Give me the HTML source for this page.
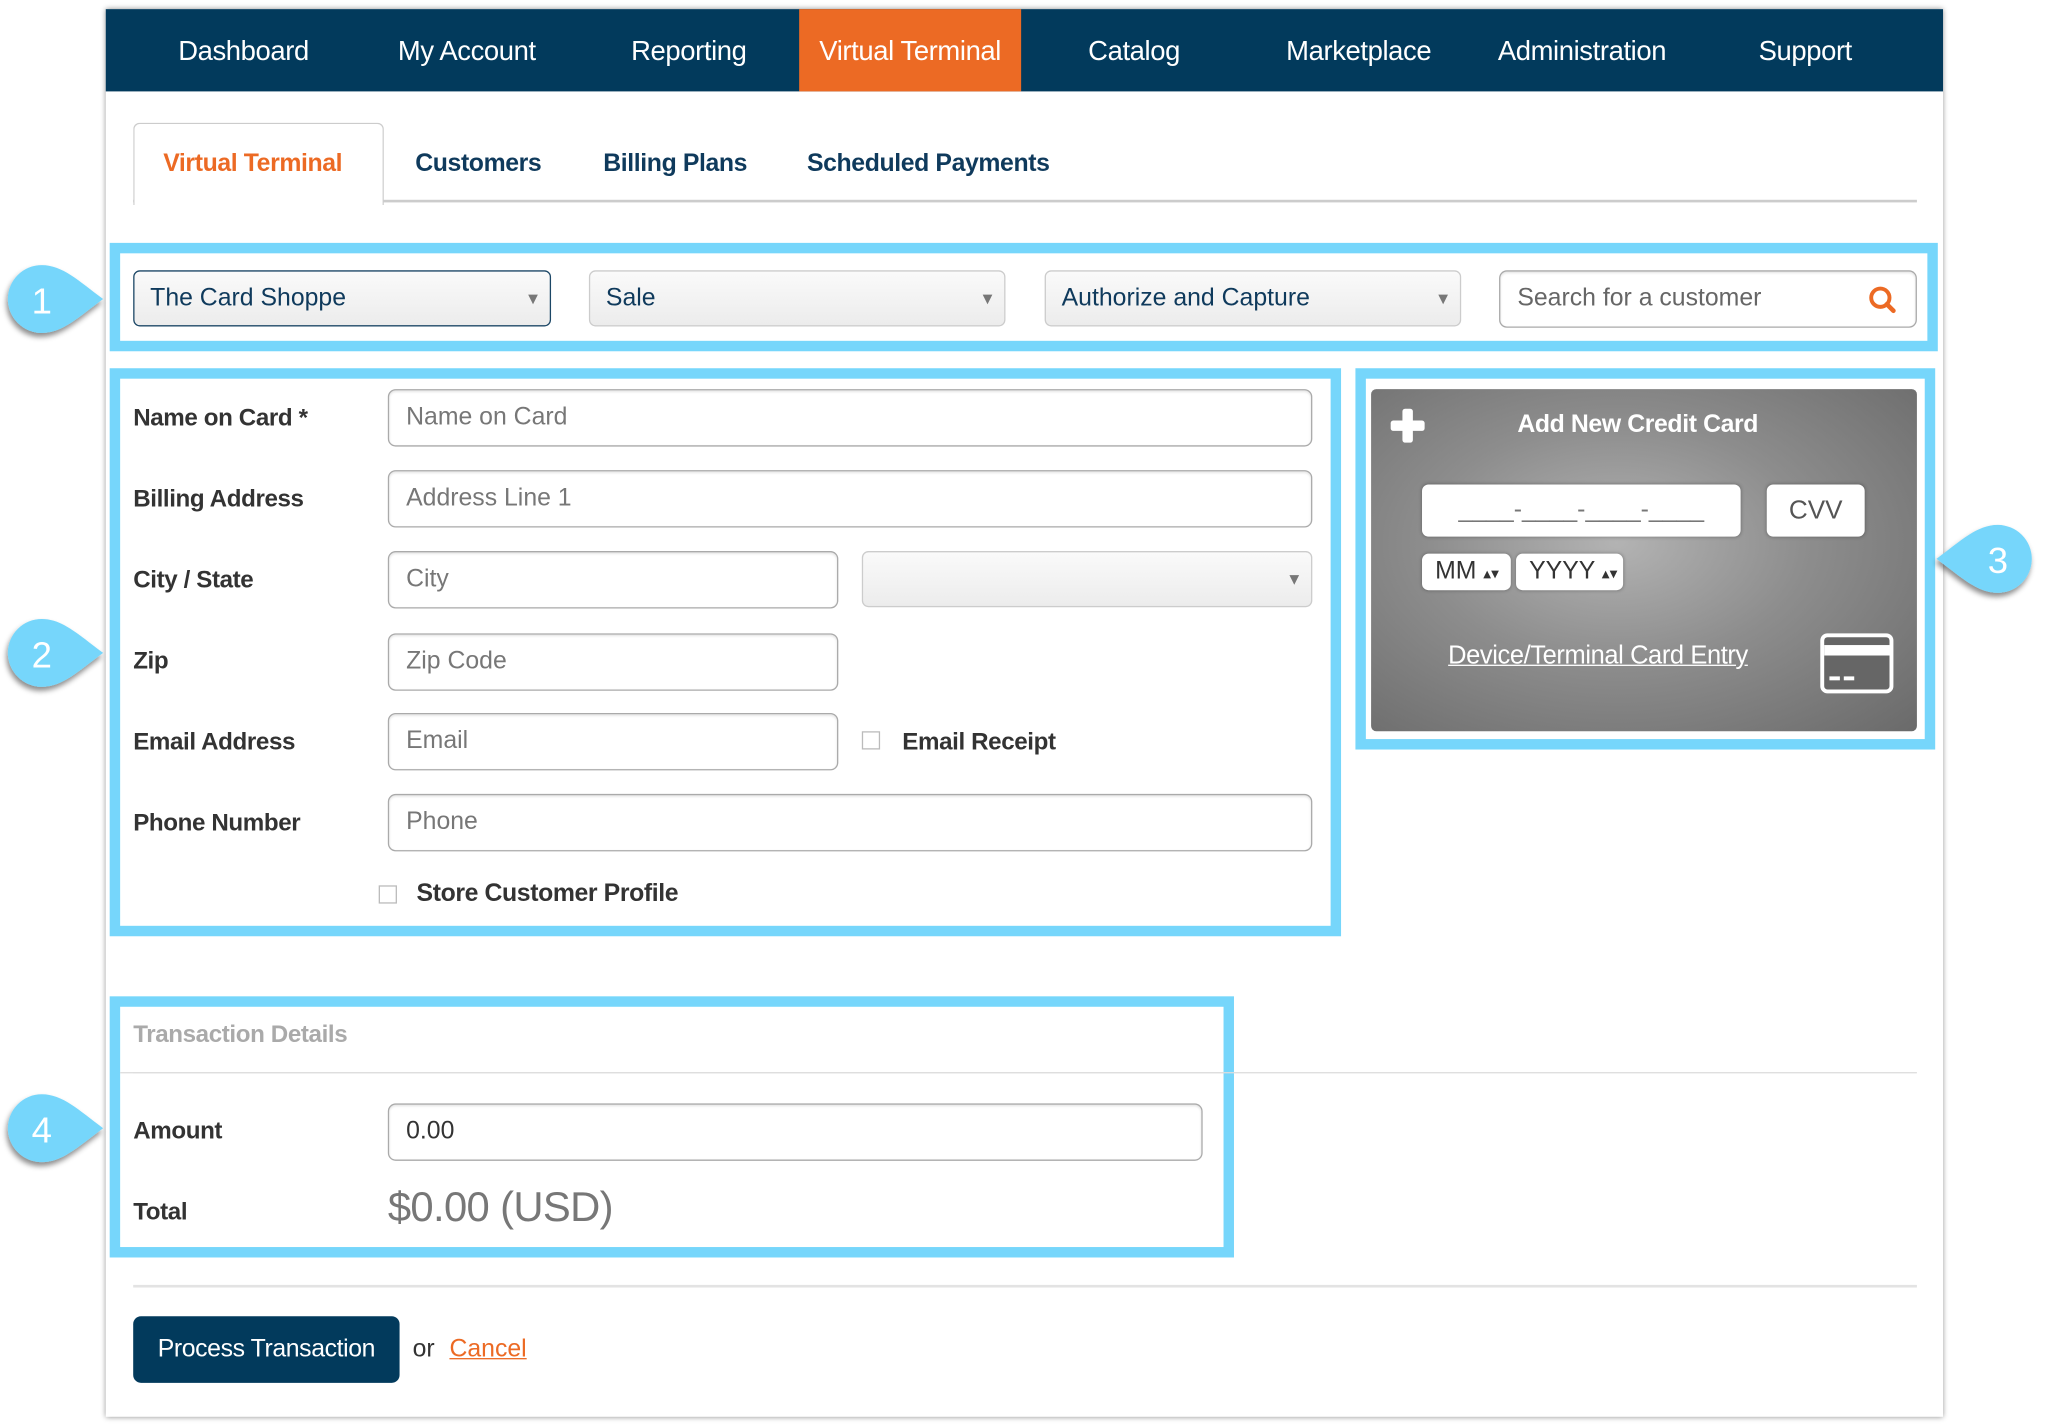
<!DOCTYPE html>
<html><head><meta charset="utf-8"><style>
html,body{margin:0;padding:0;background:#fff;width:2048px;height:1425px;overflow:hidden}
#w{position:absolute;left:0;top:0;width:1562px;height:1087px;transform:scale(1.3058);transform-origin:0 0;font-family:"Liberation Sans",sans-serif}
.a{position:absolute}
.panel{left:81px;top:7px;width:1407px;height:1078px;background:#fff;box-shadow:0 0 4px rgba(0,0,0,.45)}
.nav{left:81px;top:7px;width:1407px;height:63px;background:#023a5c}
.ni{top:9px;height:63px;line-height:62px;color:#fff;font-size:21px;text-align:center;width:171px;letter-spacing:-.3px}
.tab{top:115px;font-size:19px;font-weight:bold;color:#0f3a5c;letter-spacing:-.3px}
.bb{border:8px solid #76d6fb;box-sizing:border-box}
.sel{height:43px;box-sizing:border-box;border:1px solid #ccc;border-radius:5px;background:linear-gradient(#fafafa,#ececec);font-size:19px;color:#0f3a5c;line-height:41px;padding-left:12px}
.sel:after{content:"▾";position:absolute;right:9px;top:0;color:#777;font-size:15px}
.inp{height:44px;box-sizing:border-box;border:1px solid #aaa;border-radius:6px;background:#fff;font-size:19px;color:#777;line-height:42px;padding-left:13px;box-shadow:inset 0 1px 2px rgba(0,0,0,.12)}
.lbl{left:102px;font-size:18.5px;font-weight:bold;color:#333;letter-spacing:-.3px}
.cb{width:14px;height:14px;border:1px solid #bbb;box-sizing:border-box;background:#fff}
.card{left:1050px;top:298px;width:418px;height:262px;border-radius:4px;background:radial-gradient(ellipse at 45% 45%,#b3b3b3 0%,#8d8d8d 45%,#6a6a6a 100%)}
.wb{background:#fff;border-radius:5px;box-shadow:0 0 3px rgba(0,0,0,.3);color:#555}
</style></head><body><div id="w">
<div class="a panel"></div>
<div class="a nav"></div>
<div class="a" style="left:612px;top:7px;width:170px;height:63px;background:#ec6a24"></div>
<div class="a ni" style="left:101px">Dashboard</div>
<div class="a ni" style="left:272px">My Account</div>
<div class="a ni" style="left:442px">Reporting</div>
<div class="a ni" style="left:612px;width:170px">Virtual Terminal</div>
<div class="a ni" style="left:783px">Catalog</div>
<div class="a ni" style="left:955px">Marketplace</div>
<div class="a ni" style="left:1126px">Administration</div>
<div class="a ni" style="left:1297px">Support</div>

<div class="a" style="left:102px;top:153px;width:1366px;height:2px;background:#ccc"></div>
<div class="a" style="left:102px;top:94px;width:190px;height:62px;border:1px solid #ccc;border-bottom:none;border-radius:5px 5px 0 0;background:#fff"></div>
<div class="a tab" style="left:125px;color:#ec6a24">Virtual Terminal</div>
<div class="a tab" style="left:318px">Customers</div>
<div class="a tab" style="left:462px">Billing Plans</div>
<div class="a tab" style="left:618px">Scheduled Payments</div>

<div class="a bb" style="left:84px;top:186px;width:1400px;height:83px"></div>
<div class="a sel" style="left:102px;top:207px;width:320px;border:1.5px solid #1c4766">The Card Shoppe</div>
<div class="a sel" style="left:451px;top:207px;width:319px">Sale</div>
<div class="a sel" style="left:800px;top:207px;width:319px">Authorize and Capture</div>
<div class="a inp" style="left:1148px;top:207px;width:320px;color:#666">Search for a customer</div>
<svg class="a" style="left:1430px;top:218px" width="24" height="24" viewBox="0 0 24 24"><circle cx="10" cy="10" r="7" fill="none" stroke="#ec6a24" stroke-width="3"/><path d="M15 15l5 5" stroke="#ec6a24" stroke-width="3.5" stroke-linecap="round"/></svg>

<div class="a bb" style="left:84px;top:282px;width:943px;height:435px"></div>
<div class="a lbl" style="top:309px">Name on Card *</div>
<div class="a lbl" style="top:371px">Billing Address</div>
<div class="a lbl" style="top:433px">City / State</div>
<div class="a lbl" style="top:495px">Zip</div>
<div class="a lbl" style="top:557px">Email Address</div>
<div class="a lbl" style="top:619px">Phone Number</div>
<div class="a inp" style="left:297px;top:298px;width:708px">Name on Card</div>
<div class="a inp" style="left:297px;top:360px;width:708px">Address Line 1</div>
<div class="a inp" style="left:297px;top:422px;width:345px">City</div>
<div class="a sel" style="left:660px;top:422px;width:345px"></div>
<div class="a inp" style="left:297px;top:485px;width:345px">Zip Code</div>
<div class="a inp" style="left:297px;top:546px;width:345px">Email</div>
<div class="a cb" style="left:660px;top:560px"></div>
<div class="a lbl" style="left:691px;top:557px">Email Receipt</div>
<div class="a inp" style="left:297px;top:608px;width:708px">Phone</div>
<div class="a cb" style="left:290px;top:678px"></div>
<div class="a lbl" style="left:319px;top:674px;font-size:19px">Store Customer Profile</div>

<div class="a bb" style="left:1038px;top:282px;width:444px;height:292px"></div>
<div class="a card"></div>
<div class="a" style="left:1065px;top:313px;width:26px;height:26px">
<div class="a" style="left:0;top:9px;width:26px;height:8px;background:#fff;border-radius:2px"></div>
<div class="a" style="left:9px;top:0;width:8px;height:26px;background:#fff;border-radius:2px"></div></div>
<div class="a" style="left:1162px;top:315px;color:#fff;font-size:19px;font-weight:bold;letter-spacing:-.3px">Add New Credit Card</div>
<div class="a wb" style="left:1089px;top:371px;width:244px;height:40px;font-size:19px;line-height:40px;text-align:center;color:#777">____-____-____-____</div>
<div class="a wb" style="left:1353px;top:371px;width:75px;height:40px;font-size:20px;line-height:40px;text-align:center">CVV</div>
<div class="a wb" style="left:1089px;top:424px;width:68px;height:28px;font-size:19px;line-height:28px;padding-left:10px;box-sizing:border-box;color:#333">MM <span style="font-size:12px">▴▾</span></div>
<div class="a wb" style="left:1161px;top:424px;width:82px;height:28px;font-size:19px;line-height:28px;padding-left:10px;box-sizing:border-box;color:#333">YYYY <span style="font-size:12px">▴▾</span></div>
<div class="a" style="left:1109px;top:491px;color:#fff;font-size:19.5px;text-decoration:underline;letter-spacing:-.3px">Device/Terminal Card Entry</div>
<svg class="a" style="left:1393px;top:484px" width="58" height="48" viewBox="0 0 58 48"><rect x="2.5" y="2.5" width="53" height="43" rx="4" fill="#666" stroke="#fff" stroke-width="3"/><rect x="4" y="10" width="50" height="8" fill="#fff"/><rect x="8" y="34" width="8" height="3" fill="#fff"/><rect x="19" y="34" width="8" height="3" fill="#fff"/></svg>

<div class="a bb" style="left:84px;top:763px;width:861px;height:200px"></div>
<div class="a" style="left:102px;top:781px;font-size:18.5px;font-weight:bold;color:#aaa;letter-spacing:-.3px">Transaction Details</div>
<div class="a" style="left:102px;top:821px;width:1366px;height:1px;background:#ddd"></div>
<div class="a" style="left:92px;top:821px;width:845px;height:1px;background:#ddd"></div>
<div class="a lbl" style="top:855px">Amount</div>
<div class="a inp" style="left:297px;top:845px;width:624px;color:#333">0.00</div>
<div class="a lbl" style="top:917px">Total</div>
<div class="a" style="left:297px;top:906px;font-size:32px;color:#777;letter-spacing:-.5px">$0.00 (USD)</div>
<div class="a" style="left:102px;top:984px;width:1366px;height:2px;background:#e3e3e3"></div>
<div class="a" style="left:102px;top:1008px;width:204px;height:51px;background:#023a5c;border-radius:6px;color:#fff;font-size:19px;line-height:51px;text-align:center;letter-spacing:-.3px">Process Transaction</div>
<div class="a" style="left:316px;top:1023px;font-size:19px;color:#333">or <span style="color:#ec6a24;text-decoration:underline;margin-left:6px">Cancel</span></div>

<svg class="a" style="left:0;top:0;overflow:visible" width="1562" height="1087">
<defs><filter id="s" x="-50%" y="-50%" width="200%" height="200%"><feDropShadow dx="-1" dy="3" stdDeviation="2" flood-color="#000" flood-opacity=".45"/></filter></defs>
<g fill="#76d6fb" filter="url(#s)">
<path d="M32 203 C48 203 60 215 79 229 C60 243 48 255 32 255 A26 26 0 0 1 32 203Z"/>
<path d="M32 474 C48 474 60 486 79 500 C60 514 48 526 32 526 A26 26 0 0 1 32 474Z"/>
<path d="M32 838 C48 838 60 850 79 864 C60 878 48 890 32 890 A26 26 0 0 1 32 838Z"/>
<path d="M1530 402 C1514 402 1502 414 1483 428 C1502 442 1514 454 1530 454 A26 26 0 0 0 1530 402Z"/>
</g>
<g fill="#fff" font-family="Liberation Sans,sans-serif" font-size="28" text-anchor="middle">
<text x="32" y="240">1</text><text x="32" y="511">2</text><text x="32" y="875">4</text><text x="1530" y="439">3</text></g>
</svg>
</div></body></html>
